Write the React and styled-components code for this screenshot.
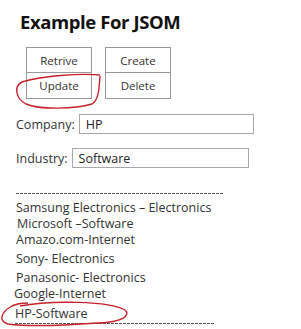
import styled, { createGlobalStyle } from 'styled-components';

const GlobalStyle = createGlobalStyle`
  body {
    margin: 0;
    background: #fff;
    font-family: "Open Sans", "Liberation Sans", sans-serif;
    color: #222;
  }
`;

const Page = styled.div`
  position: relative;
  width: 301px;
  height: 329px;
  overflow: hidden;
  padding: 9px 0 0 16px;
  box-sizing: border-box;
`;

const Title = styled.h1`
  margin: 0 0 0 4px;
  font-size: 18.5px;
  font-weight: 700;
  line-height: 26px;
  color: #111;
  letter-spacing: -0.4px;
`;

const ButtonGrid = styled.div`
  display: grid;
  grid-template-columns: 66px 66px;
  grid-auto-rows: 26px;
  column-gap: 13px;
  margin: 12px 0 0 10px;
`;

const Button = styled.div`
  display: flex;
  align-items: center;
  justify-content: center;
  border: 1px solid #9a9a9a;
  margin-top: ${({ $stacked }) => ($stacked ? '-1px' : '0')};
  font-size: 11.5px;
  color: #333;
  background: #fff;
`;

const FieldRow = styled.div`
  display: flex;
  align-items: center;
  gap: 4px;
  margin-top: ${({ $top }) => $top}px;
  font-size: 12.5px;
  color: #333;
`;

const Input = styled.div`
  width: ${({ $width }) => $width}px;
  height: 20px;
  box-sizing: border-box;
  border: 1px solid #a8a8a8;
  padding-left: 6px;
  display: flex;
  align-items: center;
  font-size: 12.5px;
  color: #222;
`;

const Separator = styled.div`
  width: ${({ $width }) => $width}px;
  height: 1px;
  margin-top: ${({ $top }) => $top}px;
  margin-bottom: ${({ $bottom }) => $bottom}px;
  margin-left: ${({ $indent }) => $indent}px;
  background: repeating-linear-gradient(
    90deg,
    #555 0,
    #555 3px,
    transparent 3px,
    transparent 4px
  );
`;

const List = styled.div`
  display: flex;
  flex-direction: column;
`;

const Item = styled.div`
  margin-top: ${({ $gap }) => $gap}px;
  margin-left: ${({ $indent }) => $indent}px;
  font-size: 12.5px;
  line-height: 15px;
  color: #333;
  white-space: nowrap;
`;

const Scribble = styled.svg`
  position: absolute;
  left: 0;
  top: 0;
  pointer-events: none;
`;

const items = [
  { text: 'Samsung Electronics \u2013 Electronics', gap: 0, indent: 0 },
  { text: 'Microsoft \u2013Software', gap: 1, indent: 1 },
  { text: 'Amazo.com-Internet', gap: 1, indent: 0 },
  { text: 'Sony- Electronics', gap: 4, indent: 0 },
  { text: 'Panasonic- Electronics', gap: 4, indent: 0 },
  { text: 'Google-Internet', gap: 1, indent: -2 },
  { text: 'HP-Software', gap: 5, indent: -1 },
];

const App = () => (
  <>
    <GlobalStyle />
    <Page>
      <Title>Example For JSOM</Title>
      <ButtonGrid>
        <Button>Retrive</Button>
        <Button>Create</Button>
        <Button $stacked>Update</Button>
        <Button $stacked>Delete</Button>
      </ButtonGrid>
      <FieldRow $top={15}>
        Company:
        <Input $width={175}>HP</Input>
      </FieldRow>
      <FieldRow $top={14}>
        Industry:
        <Input $width={177}>Software</Input>
      </FieldRow>
      <Separator $width={207} $top={25} $bottom={6} $indent={0} />
      <List>
        {items.map((item, i) => (
          <Item key={i} $gap={item.gap} $indent={item.indent}>
            {item.text}
          </Item>
        ))}
      </List>
      <Separator $width={200} $top={2} $bottom={0} $indent={-1} />
      <Scribble width="301" height="329" viewBox="0 0 301 329">
        <path
          d="M100 75 C 80 73, 40 76, 22 82 C 14 86, 15 98, 26 104 C 40 110, 75 109, 92 104 C 99 100, 99 88, 100 76"
          fill="none"
          stroke="#c8202a"
          strokeWidth="1.4"
        />
        <path
          d="M20 306 C 50 300, 110 301, 125 310 C 131 316, 122 322, 98 323 C 70 325, 30 327, 8 324 C -2 321, 1 312, 12 306 C 16 304, 22 303, 28 303"
          fill="none"
          stroke="#c8202a"
          strokeWidth="1.4"
        />
      </Scribble>
    </Page>
  </>
);

export default App;
